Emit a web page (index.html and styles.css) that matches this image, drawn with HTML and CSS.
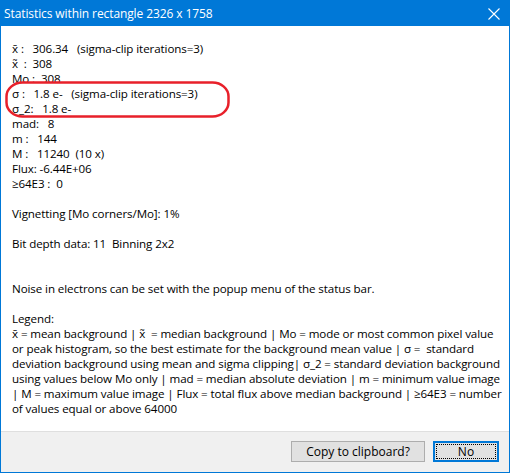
FILE: index.html
```html
<!DOCTYPE html>
<html lang="en">
<head>
  <meta charset="UTF-8">
  <title>Statistics within rectangle</title>
  <link rel="stylesheet" href="styles.css">
</head>
<body>
  <div class="window">
    <div class="titlebar">
      <span class="title">Statistics within rectangle 2326 x 1758</span>
      <svg class="close" width="12" height="12" viewBox="0 0 12 12">
        <path d="M0.5 0.5 L11.5 11.5 M11.5 0.5 L0.5 11.5" stroke="#fff" stroke-width="1.1" fill="none"/>
      </svg>
    </div>

    <div class="content">
      <!-- stats block, one value per line -->
<div class="stats">x̄ :   306.34   (sigma-clip iterations=3)
x̃  :  308
Mo :  308
σ :   1.8 e-   (sigma-clip iterations=3)
σ_2:   1.8 e-
mad:   8
m :   144
M :   11240  (10 x)
Flux: -6.44E+06
≥64E3 :  0

Vignetting [Mo corners/Mo]: 1%

Bit depth data: 11  Binning 2x2


Noise in electrons can be set with the popup menu of the status bar.

Legend:
x̄ = mean background | x̃  = median background | Mo = mode or most common pixel value
or peak histogram, so the best estimate for the background mean value | σ =  standard
deviation background using mean and sigma clipping| σ_2 = standard deviation background
using values below Mo only | mad = median absolute deviation | m = minimum value image
| M = maximum value image | Flux = total flux above median background | ≥64E3 = number
of values equal or above 64000</div>

      <!-- red marker round the sigma lines -->
      <svg class="marker" width="226" height="38" viewBox="0 0 226 38">
        <rect x="1.5" y="1.5" width="222" height="34" rx="16" ry="14" fill="none" stroke="#e8202a" stroke-width="2.5"/>
      </svg>
    </div>

    <div class="footer">
      <button class="btn">Copy to clipboard?</button>
      <button class="btn default"><span class="focus">No</span></button>
    </div>
  </div>
</body>
</html>
```

FILE: styles.css
```css
html, body {
  margin: 0;
  padding: 0;
  background: #fff;
}

body {
  font-family: "Open Sans", "Noto Sans", Arial, sans-serif;
  font-size: 12px;
  color: #000;
}

.window {
  width: 510px;
  height: 473px;
  box-sizing: border-box;
  border: 1px solid #0078d7;
  border-top: none;
  display: flex;
  flex-direction: column;
}

.titlebar {
  height: 26px;
  margin: 0 -1px;
  background: #0078d7;
  color: #fff;
  display: flex;
  align-items: center;
  justify-content: space-between;
  padding: 0 10px 0 4px;
  flex-shrink: 0;
}

.title {
  font-size: 12px;
  letter-spacing: -0.1px;
}

.close {
  display: block;
  margin-top: 1px;
}

.content {
  position: relative;
  flex: 1;
  background: #fff;
  padding: 15px 0 0 11px;
}

.stats {
  white-space: pre;
  line-height: 15px;
  font-size: 11.6px;
  letter-spacing: -0.1px;
}

.marker {
  position: absolute;
  left: 4px;
  top: 55px;
}

.footer {
  height: 41px;
  flex-shrink: 0;
  background: #f0f0f0;
  border-top: 1px solid #dfdfdf;
  display: flex;
  justify-content: flex-end;
  align-items: flex-start;
  gap: 8px;
  padding: 9px 10px 0 0;
  box-sizing: border-box;
}

.btn {
  height: 21px;
  width: 134px;
  padding: 0;
  background: #e1e1e1;
  border: 1px solid #adadad;
  font-family: inherit;
  font-size: 12px;
  color: #000;
}

.btn.default {
  width: 66px;
  border: 2px solid #0078d7;
  padding: 1px;
}

.focus {
  display: block;
  height: 100%;
  box-sizing: border-box;
  border: 1px dotted #000;
  line-height: 13px;
}
```
